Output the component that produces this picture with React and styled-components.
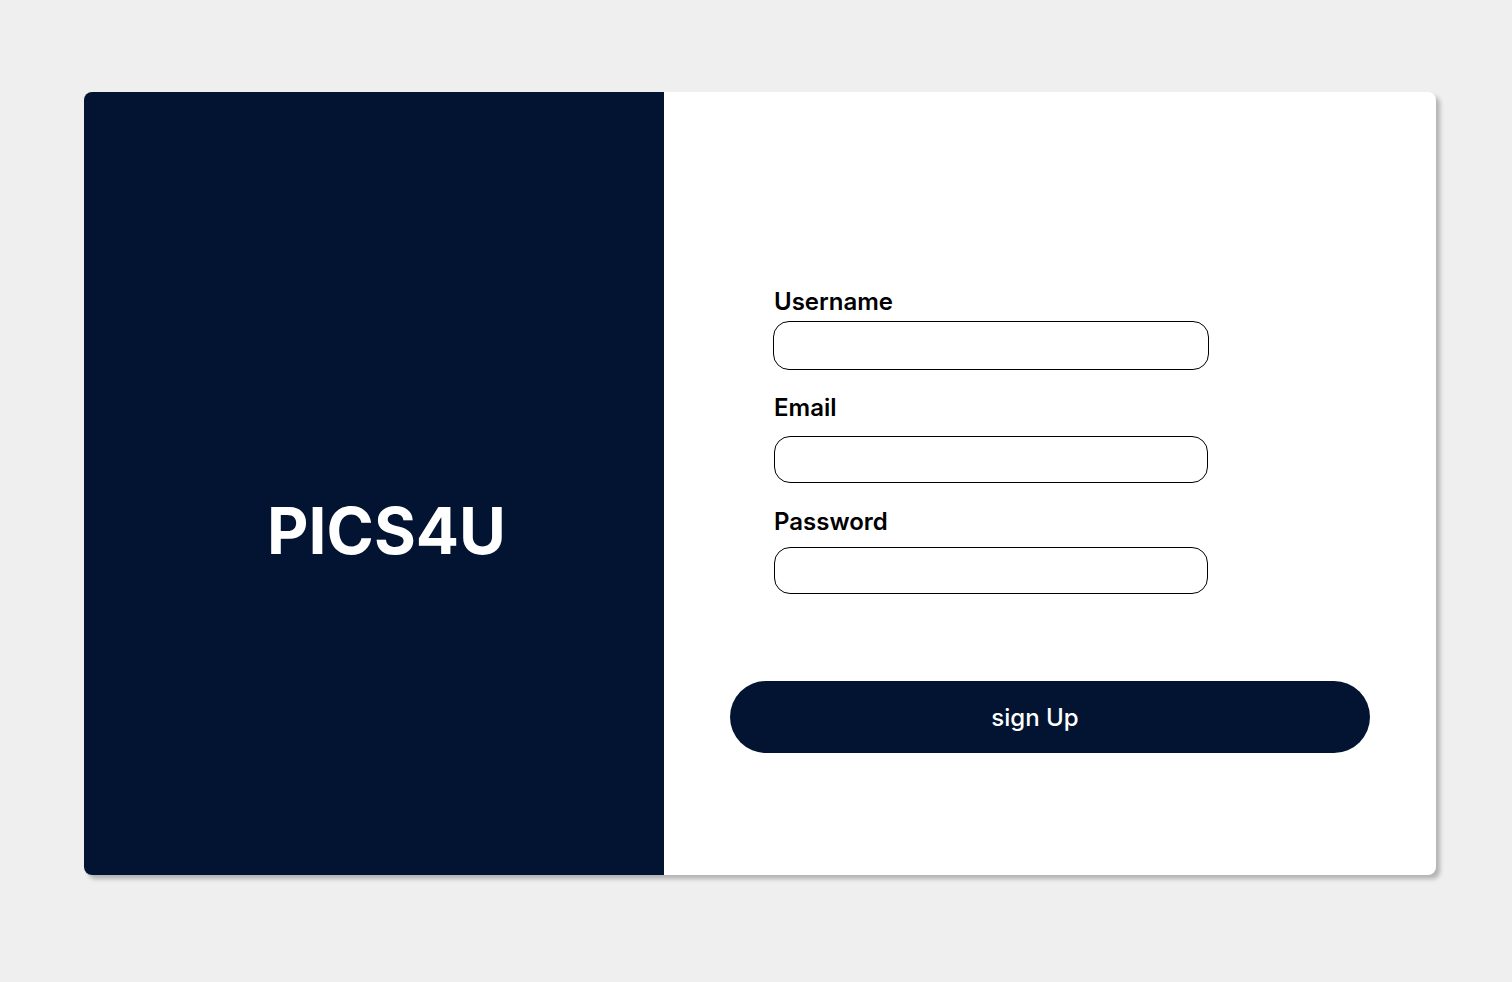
import React from "react";
import styled, { createGlobalStyle } from "styled-components";

const Global = createGlobalStyle`
  html, body { margin: 0; padding: 0; background: #efefef; }
  body { font-family: Inter, "Noto Sans", sans-serif; }
`;

const Page = styled.div`
  min-height: 982px;
  padding: 92px 76px 0 84px;
  box-sizing: border-box;
`;

const Card = styled.div`
  display: grid;
  grid-template-columns: 580px 1fr;
  height: 783px;
  border-radius: 8px;
  overflow: hidden;
  background: #ffffff;
  box-shadow: 4px 4px 4px rgba(0, 0, 0, 0.25);
`;

const Brand = styled.div`
  background: #021431;
  display: flex;
  align-items: center;
  justify-content: center;
  padding-left: 25px;
  padding-top: 94px;
`;

const Logo = styled.h1`
  margin: 0;
  color: #ffffff;
  font-family: Inter, sans-serif;
  font-weight: 700;
  font-size: 64px;
  line-height: 1;
  letter-spacing: 0;
`;

const FormPanel = styled.form`
  display: flex;
  flex-direction: column;
  padding: 197px 66px 0 66px;
`;

const Fields = styled.div`
  display: flex;
  flex-direction: column;
  padding-left: 44px;
`;

const Field = styled.div`
  display: flex;
  flex-direction: column;
  margin-top: ${(p) => p.$top}px;
`;

const Label = styled.label`
  font-family: Inter, sans-serif;
  font-weight: 600;
  font-size: 24px;
  line-height: 26px;
  color: #000;
  margin-bottom: ${(p) => p.$gap}px;
`;

const Input = styled.input`
  box-sizing: border-box;
  width: ${(p) => p.$w}px;
  height: ${(p) => p.$h}px;
  margin-left: ${(p) => p.$x}px;
  border: 1px solid #000;
  border-radius: 16px;
  background: #fff;
  outline: none;
  padding: 0 16px;
  font-family: Inter, sans-serif;
  font-size: 18px;
`;

const Button = styled.button`
  margin-top: 87px;
  height: 72px;
  width: 640px;
  border: none;
  border-radius: 36px;
  background: #021431;
  color: #fff;
  font-family: Inter, sans-serif;
  font-weight: 500;
  font-size: 24px;
  padding: 0 30px 0 0;
  cursor: pointer;
`;

export default function App() {
  return (
    <>
      <Global />
      <Page>
        <Card>
          <Brand>
            <Logo>PICS4U</Logo>
          </Brand>
          <FormPanel onSubmit={(e) => e.preventDefault()}>
            <Fields>
              <Field $top={0}>
                <Label $gap={6}>Username</Label>
                <Input $w={436} $h={49} $x={-1} />
              </Field>
              <Field $top={25}>
                <Label $gap={15}>Email</Label>
                <Input $w={434} $h={47} $x={0} />
              </Field>
              <Field $top={26}>
                <Label $gap={12}>Password</Label>
                <Input type="password" $w={434} $h={47} $x={0} />
              </Field>
            </Fields>
            <Button type="submit">sign Up</Button>
          </FormPanel>
        </Card>
      </Page>
    </>
  );
}
